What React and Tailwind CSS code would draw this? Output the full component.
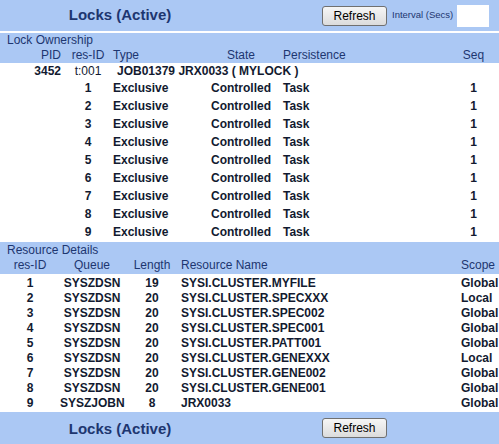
import React from "react";

const F = { fontFamily: '"Liberation Sans", Arial, sans-serif' };

function Btn() {
  return (
    <button
      className="h-[20px] w-[65px] rounded-[3px] border border-[#707070] bg-gradient-to-b from-[#f6f6f6] to-[#dcdcdc] text-[12px] leading-none text-black"
      style={F}
    >
      Refresh
    </button>
  );
}

const lockRows = [1, 2, 3, 4, 5, 6, 7, 8, 9];

const resRows = [
  ["1", "SYSZDSN", "19", "SYSI.CLUSTER.MYFILE", "Global"],
  ["2", "SYSZDSN", "20", "SYSI.CLUSTER.SPECXXX", "Local"],
  ["3", "SYSZDSN", "20", "SYSI.CLUSTER.SPEC002", "Global"],
  ["4", "SYSZDSN", "20", "SYSI.CLUSTER.SPEC001", "Global"],
  ["5", "SYSZDSN", "20", "SYSI.CLUSTER.PATT001", "Global"],
  ["6", "SYSZDSN", "20", "SYSI.CLUSTER.GENEXXX", "Local"],
  ["7", "SYSZDSN", "20", "SYSI.CLUSTER.GENE002", "Global"],
  ["8", "SYSZDSN", "20", "SYSI.CLUSTER.GENE001", "Global"],
  ["9", "SYSZJOBN", "8", "JRX0033", "Global"],
];

const lockGrid = "grid grid-cols-[64px_48px_88px_82px_168px_47px]";
const resGrid = "grid grid-cols-[60px_64px_56px_280px_39px]";

export default function App() {
  return (
    <div className="w-[499px] h-[444px] overflow-hidden bg-white text-[12px]" style={F}>
      {/* Top bar */}
      <div className="flex h-[31px] items-center bg-[#abc8f4]">
        <div className="w-[240px] text-center text-[15px] font-bold text-[#1d3670]">Locks (Active)</div>
        <div className="ml-[82px] flex items-center">
          <Btn />
          <span className="ml-[5px] text-[9.5px] text-[#1d3670]">Interval (Secs)</span>
          <input className="ml-[4px] h-[22px] w-[32px] bg-white outline-none" />
        </div>
      </div>

      {/* Lock Ownership header */}
      <div className="mt-[2px] h-[30px] bg-[#abc8f4] text-[#1d3670] leading-[15px]">
        <div className="pl-[7px]">Lock Ownership</div>
        <div className={lockGrid}>
          <div className="pr-[3px] text-right">PID</div>
          <div className="text-center">res-ID</div>
          <div className="pl-[1px]">Type</div>
          <div className="text-center">State</div>
          <div className="pl-[1px]">Persistence</div>
          <div className="text-center">Seq</div>
        </div>
      </div>

      {/* Lock rows */}
      <div className="font-bold text-[#121a30]">
        <div className={lockGrid + " h-[15px] mt-[1px] leading-[15px]"}>
          <div className="pr-[3px] text-right">3452</div>
          <div className="text-center font-normal">t:001</div>
          <div className="col-span-3 pl-[5px]">JOB01379 JRX0033 ( MYLOCK )</div>
          <div />
        </div>
        {lockRows.map((n) => (
          <div key={n} className={lockGrid + " h-[18px] leading-[18px]"}>
            <div />
            <div className="text-center">{n}</div>
            <div className="pl-[1px]">Exclusive</div>
            <div className="text-center">Controlled</div>
            <div className="pl-[1px]">Task</div>
            <div className="text-center">1</div>
          </div>
        ))}
      </div>

      {/* Resource Details header */}
      <div className="mt-[1px] h-[32px] bg-[#abc8f4] pt-[1px] text-[#1d3670] leading-[15px]">
        <div className="pl-[7px]">Resource Details</div>
        <div className={resGrid}>
          <div className="text-center">res-ID</div>
          <div className="text-center">Queue</div>
          <div className="text-center">Length</div>
          <div className="pl-[1px]">Resource Name</div>
          <div className="pl-[1px]">Scope</div>
        </div>
      </div>

      {/* Resource rows */}
      <div className="mt-[2px] font-bold text-[#121a30]">
        {resRows.map((r) => (
          <div key={r[0]} className={resGrid + " h-[15px] leading-[15px]"}>
            <div className="text-center">{r[0]}</div>
            <div className="text-center">{r[1]}</div>
            <div className="text-center">{r[2]}</div>
            <div className="pl-[1px]">{r[3]}</div>
            <div className="pl-[1px]">{r[4]}</div>
          </div>
        ))}
      </div>

      {/* Bottom bar */}
      <div className="mt-[1px] flex h-[40px] items-start bg-[#abc8f4]">
        <div className="w-[240px] pt-[8px] text-center text-[15px] font-bold leading-[18px] text-[#1d3670]">Locks (Active)</div>
        <div className="ml-[82px] pt-[6px]">
          <Btn />
        </div>
      </div>
    </div>
  );
}
